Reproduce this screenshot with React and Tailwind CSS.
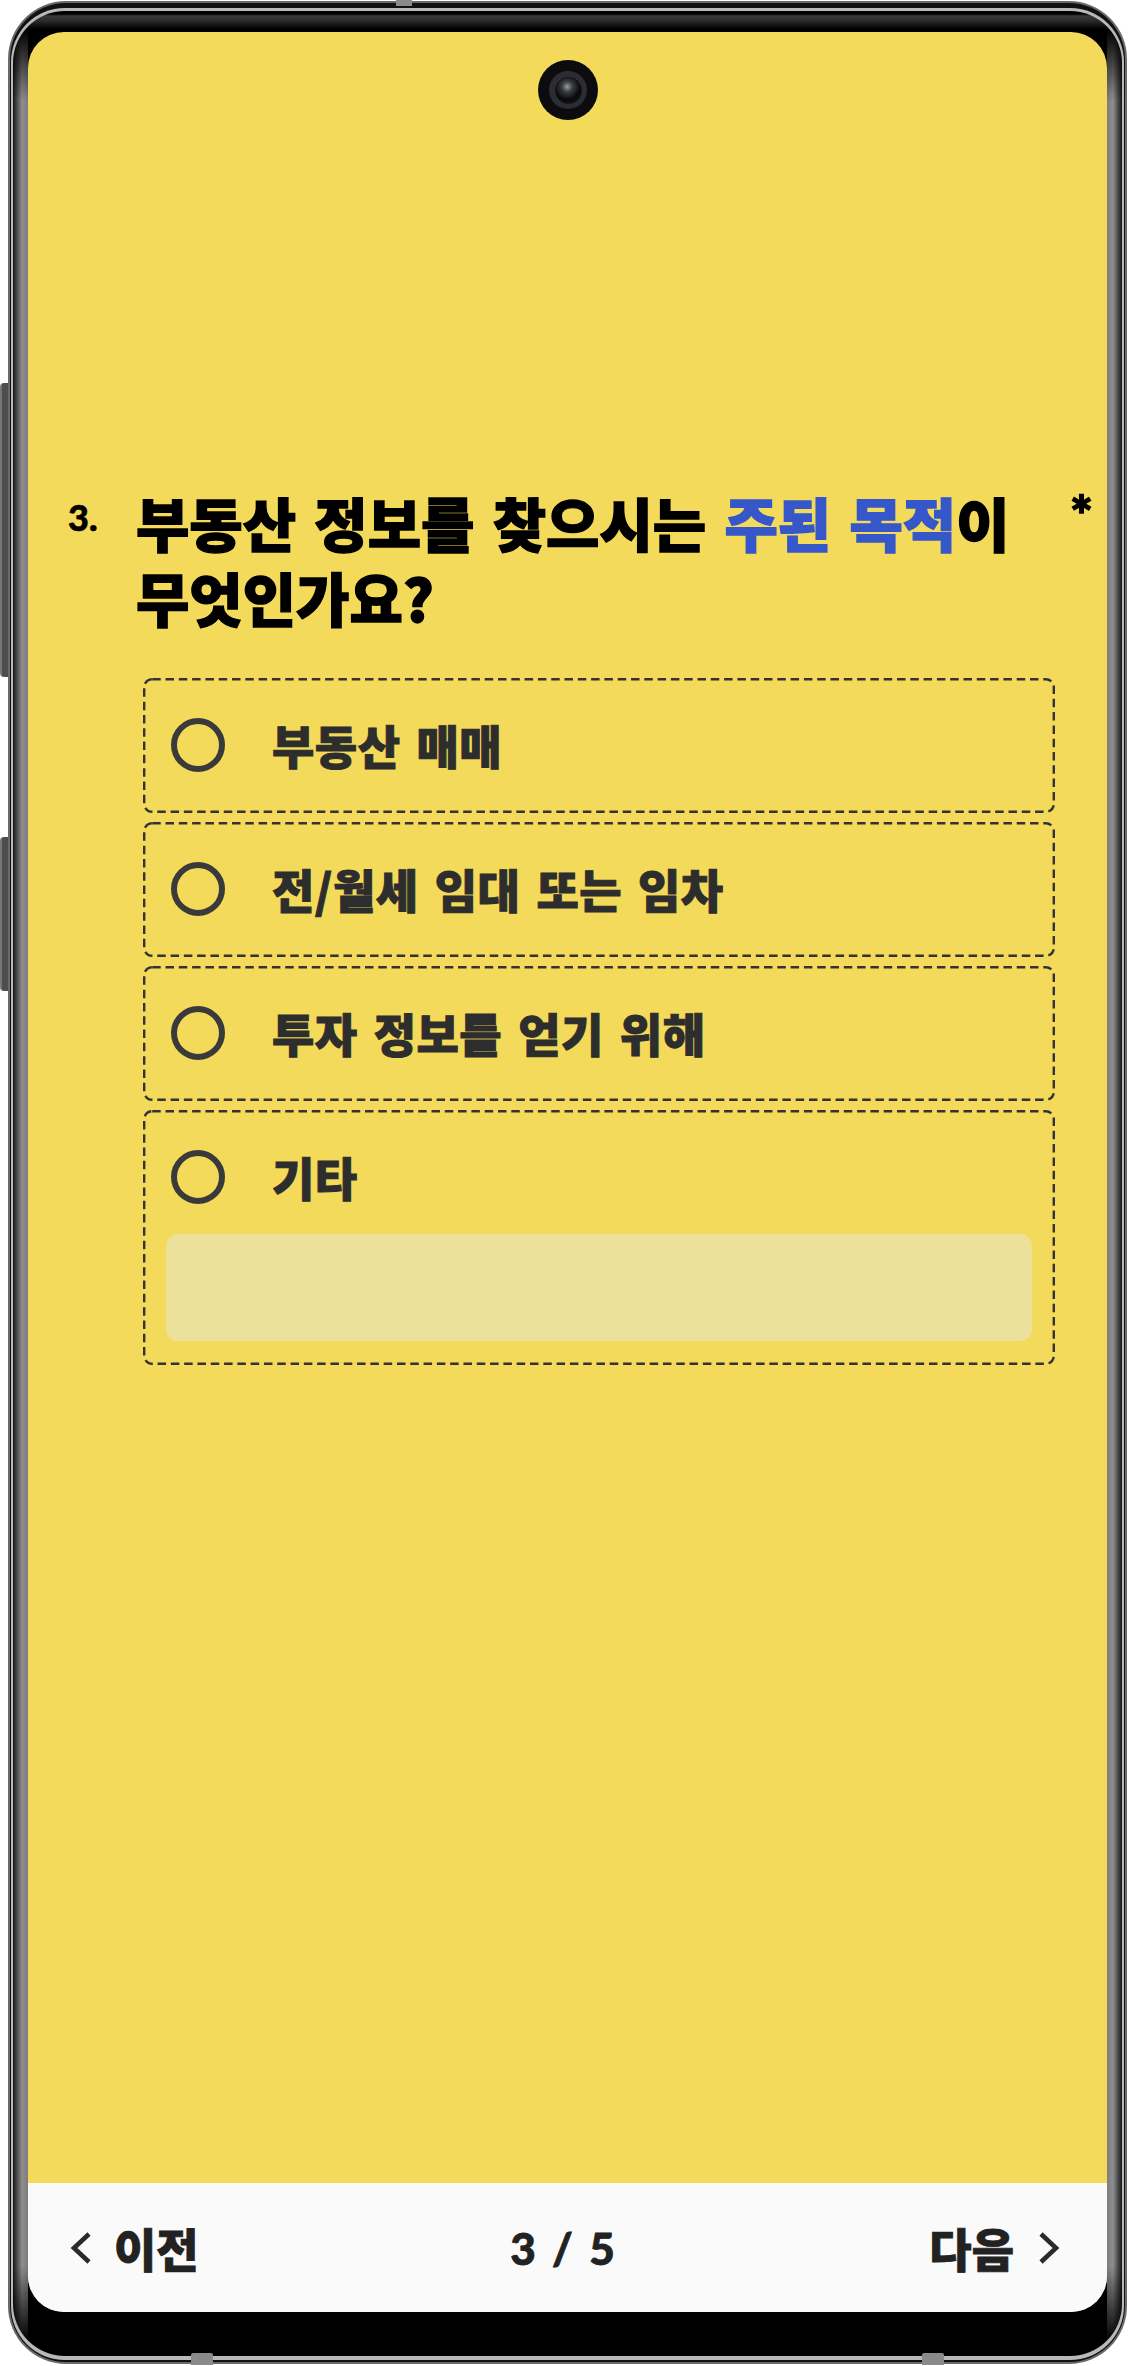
import React from "react";

const KR = "font-['Noto_Sans_CJK_KR','Noto_Sans',sans-serif]";

const options = ["부동산 매매", "전/월세 임대 또는 임차", "투자 정보를 얻기 위해"];

// css dashed borders come out too short here, so the outline is drawn
const DashedOutline = () => (
  <svg className="absolute inset-0 w-full h-full pointer-events-none" fill="none">
    <rect
      x="1.2"
      y="1.2"
      rx="8"
      className="w-[calc(100%-2.4px)] h-[calc(100%-2.4px)]"
      stroke="#333"
      strokeWidth="2.4"
      strokeDasharray="8.5 4.8"
    />
  </svg>
);

const OptionRow = ({ label }) => (
  <div className="flex items-center h-[54px] pl-[28px]">
    <span className="w-[54px] h-[54px] rounded-full border-[6px] border-[#3a3a3a] shrink-0" />
    <span className="ml-[47px] pb-[2px] text-[46px] leading-[54px] font-black text-[#2d2d2d] tracking-[0.5px] [word-spacing:5px] [-webkit-text-stroke:1px_currentColor]">
      {label}
    </span>
  </div>
);

const Chevron = ({ right }) => (
  <svg width="22" height="34" viewBox="0 0 22 34" fill="none" className="shrink-0">
    <path
      d={right ? "M3 3 L18 17 L3 31" : "M19 3 L4 17 L19 31"}
      stroke="#2a2a2a"
      strokeWidth="4.6"
      strokeLinecap="butt"
      strokeLinejoin="miter"
    />
  </svg>
);

const Camera = () => (
  <div className="absolute left-[510px] top-[28px] w-[60px] h-[60px] rounded-full bg-[#0c0c0f] flex items-center justify-center">
    <div className="w-[38px] h-[38px] rounded-full bg-[#2c2c35] flex items-center justify-center">
      <div className="w-[27px] h-[27px] rounded-full bg-[radial-gradient(circle_at_45%_35%,#9a9a9a_0,#3a3d40_25%,#08090a_60%,#1a1c1e_100%)] border border-[#101012]" />
    </div>
  </div>
);

export default function App() {
  return (
    <div className={`relative w-[1130px] h-[2366px] bg-white overflow-hidden pl-[8px] pt-[1px] ${KR}`}>
      {/* side keys */}
      <div className="absolute left-0 top-[383px] w-[9px] h-[294px] rounded-l-[4px] bg-[#4d4d4d] border-l-2 border-[#777]" />
      <div className="absolute left-0 top-[837px] w-[9px] h-[154px] rounded-l-[4px] bg-[#4d4d4d] border-l-2 border-[#777]" />

      {/* phone body, each layer is one ring of the frame */}
      <div className="relative w-[1119px] h-[2363px] rounded-[58px] bg-[#6a6a6a] p-[2px]">
        <div className="w-full h-full rounded-[56px] bg-[#111] pt-[5px] px-[1px] pb-[2px]">
          <div className="w-full h-full rounded-[54px] bg-[#b9b9b9] p-[2px] pt-[3px] pb-[4px]">
            <div className="w-full h-full rounded-[52px] bg-[linear-gradient(to_bottom,#000_0,#000_3px,#3a3a3a_5px,#2a2a2a_10px,#000_18px,transparent_90px,transparent_calc(100%-90px),#000_calc(100%-14px)),linear-gradient(to_right,#161616_0,#8f8f8f_9px,#7c7c7c_15px,#000_15px,#000_calc(100%-15px),#7c7c7c_calc(100%-15px),#8f8f8f_calc(100%-9px),#161616_100%)] pt-[21px] pl-[15px] pr-[15px] pb-[44px]">
              {/* screen */}
              <div className="relative w-full h-full rounded-[36px] overflow-hidden bg-[#f3da5b] flex flex-col">
                <Camera />

                <div className="flex-1 pt-[453px]">
                  <div className="flex items-start">
                    <div className="w-[108px] pl-[40px] pt-[14px] font-['Lato',sans-serif] font-black text-[36px] leading-[36px] text-black [-webkit-text-stroke:0.6px_currentColor]">
                      3.
                    </div>
                    <h1 className="w-[920px] text-[58px] leading-[75px] font-black text-black [word-spacing:5px] [-webkit-text-stroke:1.4px_currentColor]">
                      부동산 정보를 찾으시는 <span className="text-[#3557c9]">주된 목적</span>이
                      <br />
                      무엇인가요?
                    </h1>
                    <div className="pl-[14px] pt-[3px] font-['Lato',sans-serif] font-black text-[54px] leading-[54px] text-black [-webkit-text-stroke:1.5px_currentColor]">
                      *
                    </div>
                  </div>

                  <div className="ml-[115px] mt-[43px] w-[912px] flex flex-col gap-[9px]">
                    {options.map((label) => (
                      <div key={label} className="relative h-[135px] flex items-center pb-[2px]">
                        <DashedOutline />
                        <OptionRow label={label} />
                      </div>
                    ))}
                    <div className="relative h-[255px] pt-[40px]">
                      <DashedOutline />
                      <OptionRow label="기타" />
                      <div className="mx-[23px] mt-[30px] h-[107px] rounded-[12px] bg-[#ece19b]" />
                    </div>
                  </div>
                </div>

                <div className="h-[129px] bg-[#fafafa] flex items-center justify-between pl-[42px] pr-[47px] text-[46px] font-black text-[#222] [-webkit-text-stroke:0.8px_currentColor]">
                  <div className="flex items-center gap-[22px]">
                    <Chevron />
                    <span>이전</span>
                  </div>
                  <span className="font-['Lato',sans-serif] text-[44px] tracking-[3px]">3 / 5</span>
                  <div className="flex items-center gap-[24px]">
                    <span>다음</span>
                    <Chevron right />
                  </div>
                </div>
              </div>
            </div>
          </div>
        </div>

        {/* small seams on the metal rim */}
        <div className="absolute left-[388px] -top-[1px] w-[16px] h-[6px] bg-[#8a8a8a]" />
        <div className="absolute left-[183px] -bottom-[1px] w-[22px] h-[12px] rounded-t-[2px] bg-[#8a8a8a]" />
        <div className="absolute left-[914px] -bottom-[1px] w-[22px] h-[12px] rounded-t-[2px] bg-[#8a8a8a]" />
      </div>
    </div>
  );
}
